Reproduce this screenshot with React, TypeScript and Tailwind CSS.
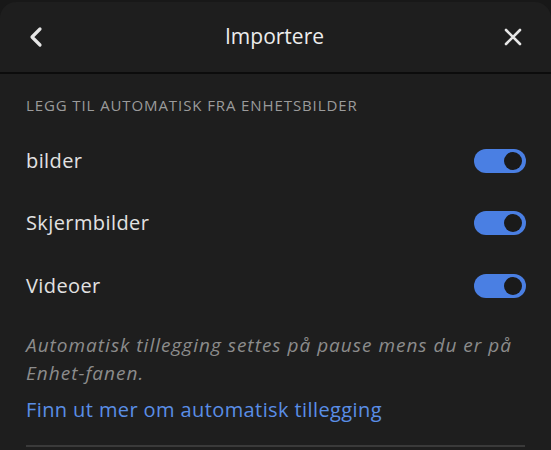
import React, { useState } from "react";

const Toggle: React.FC<{ on: boolean; onChange: () => void }> = ({ on, onChange }) => (
  <button
    onClick={onChange}
    className={`relative h-[24px] w-[52px] rounded-full ${on ? "bg-[#4a7fe3]" : "bg-[#555]"}`}
  >
    <span
      className={`absolute top-[3px] h-[18px] w-[18px] rounded-full bg-[#1a1a1a] ${
        on ? "right-[4px]" : "left-[4px]"
      }`}
    />
  </button>
);

const rows = ["bilder", "Skjermbilder", "Videoer"];

export default function App() {
  const [state, setState] = useState<boolean[]>([true, true, true]);

  return (
    <div
      className="h-[450px] w-[551px] overflow-hidden bg-[#181818]"
      style={{ fontFamily: '"Open Sans", "Liberation Sans", sans-serif' }}
    >
      <div className="mt-[2px] h-full rounded-t-[16px] bg-[#1e1e1e]">
        <div className="flex h-[72px] items-center justify-between border-b-2 border-[#0c0c0c] pl-[27px] pr-[29px]">
          <svg width="18" height="22" viewBox="0 0 18 22" fill="none">
            <path d="M13 3 L5 11 L13 19" stroke="#e6e6e6" strokeWidth="3.2" strokeLinecap="round" strokeLinejoin="round" />
          </svg>
          <h1 className="text-[21px] text-[#ececec]">Importere</h1>
          <svg width="18" height="18" viewBox="0 0 18 18" fill="none">
            <path d="M2 2 L16 16 M16 2 L2 16" stroke="#e6e6e6" strokeWidth="2.6" strokeLinecap="round" />
          </svg>
        </div>

        <div className="pl-[26px] pr-[25px] pt-[20px]">
          <p className="text-[15px] tracking-[0.9px] text-[#9b9b9b]">
            LEGG TIL AUTOMATISK FRA ENHETSBILDER
          </p>

          <div className="mt-[13px]">
            {rows.map((r, i) => (
              <div key={r} className="flex h-[62.5px] items-center justify-between">
                <span className="text-[20px] tracking-[0.4px] text-[#e2e2e2]">{r}</span>
                <Toggle
                  on={state[i]}
                  onChange={() => setState(state.map((v, j) => (j === i ? !v : v)))}
                />
              </div>
            ))}
          </div>

          <p className="mt-[14px] w-[490px] text-[19px] italic leading-[28px] tracking-[1px] text-[#8c8c8c]">
            Automatisk tillegging settes på pause mens du er på Enhet-fanen.
          </p>
          <a className="mt-[8px] block text-[20px] tracking-[0.4px] text-[#5a8ee6]" href="#">
            Finn ut mer om automatisk tillegging
          </a>
          <div className="mr-[1px] mt-[20px] h-[2px] bg-[#3a3a3a]" />
        </div>
      </div>
    </div>
  );
}
